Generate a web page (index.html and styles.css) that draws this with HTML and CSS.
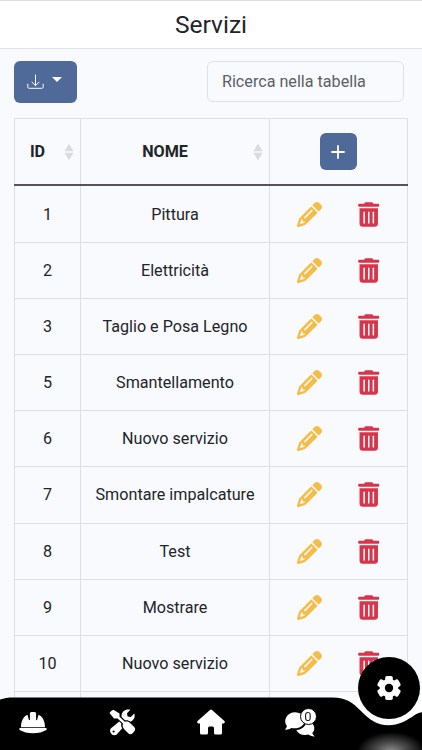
FILE: index.html
```html
<!DOCTYPE html>
<html lang="it">

<head>
  <meta charset="UTF-8">
  <meta name="viewport" content="width=device-width, initial-scale=1.0">
  <title>Servizi</title>
  <link rel="stylesheet" href="styles.css">
</head>

<body>
<!-- icone -->
<svg class="sprite" width="0" height="0">
  <symbol id="pencil" viewBox="0 0 512 512">
    <path d="M410.3 231l11.3-11.3-33.9-33.9-62.1-62.1L291.7 89.8l-11.3 11.3-22.6 22.6L58.6 322.9c-10.4 10.4-18 23.3-22.2 37.4L1 480.7c-2.5 8.4-.2 17.5 6.1 23.7s15.3 8.5 23.7 6.1l120.3-35.4c14.1-4.2 27-11.8 37.4-22.2L387.7 253.7 410.3 231zM160 399.4l-9.1 22.7c-4 3.1-8.5 5.4-13.3 6.9L59.4 452l23-78.1c1.4-4.9 3.8-9.4 6.9-13.3l22.7-9.1v32c0 8.8 7.2 16 16 16h32zM362.7 18.7L348.3 33.2 325.7 55.8 314.3 67.1l33.9 33.9 62.1 62.1 33.9 33.9 11.3-11.3 22.6-22.6 14.5-14.5c25-25 25-65.5 0-90.5L453.3 18.7c-25-25-65.5-25-90.5 0zm-47.4 168l-144 144c-6.2 6.2-16.4 6.2-22.6 0s-6.2-16.4 0-22.6l144-144c6.2-6.2 16.4-6.2 22.6 0s6.2 16.4 0 22.6z"/>
  </symbol>
  <symbol id="trash" viewBox="0 0 448 512">
    <path d="M135.2 17.7C140.6 6.8 151.7 0 163.8 0H284.2c12.1 0 23.2 6.8 28.6 17.7L320 32h96c17.7 0 32 14.3 32 32s-14.3 32-32 32H32C14.3 96 0 81.7 0 64S14.3 32 32 32h96l7.2-14.3zM32 128H416V448c0 35.3-28.7 64-64 64H96c-35.3 0-64-28.7-64-64V128zm96 64c-8.8 0-16 7.2-16 16V432c0 8.8 7.2 16 16 16s16-7.2 16-16V208c0-8.8-7.2-16-16-16zm96 0c-8.8 0-16 7.2-16 16V432c0 8.8 7.2 16 16 16s16-7.2 16-16V208c0-8.8-7.2-16-16-16zm96 0c-8.8 0-16 7.2-16 16V432c0 8.8 7.2 16 16 16s16-7.2 16-16V208c0-8.8-7.2-16-16-16z"/>
  </symbol>
  <symbol id="sort" viewBox="0 0 10 18">
    <path d="M5 .8L9.600 8.200H.4zM.4 9.800h9.200L5 17.200z"/>
  </symbol>
</svg>

<header class="page_header">
  <h1>Servizi</h1>
</header>

<main class="content">
  <div class="toolbar">
    <button class="btn btn_export" type="button" aria-label="Esporta">
      <svg class="icon_download" viewBox="0 0 17 16"><path d="M8.500 1v10.500M5 8.200l3.500 3.500L12 8.200M.8 10.200v2.600c0 1 .5 1.500 1.500 1.500h12.400c1 0 1.500-.5 1.500-1.500v-2.600"/></svg>
      <i class="caret"></i>
    </button>
    <input class="search" type="text" placeholder="Ricerca nella tabella">
  </div>

  <div class="table">
    <div class="row row_head">
      <div class="cell">ID<svg class="sort"><use href="#sort"/></svg></div>
      <div class="cell">NOME<svg class="sort"><use href="#sort"/></svg></div>
      <div class="cell">
        <button class="btn btn_add" type="button" aria-label="Aggiungi">
          <svg width="14" height="14" viewBox="0 0 14 14"><path d="M7 1v12M1 7h12"/></svg>
        </button>
      </div>
    </div>
    <div class="row">
      <div class="cell">1</div>
      <div class="cell">Pittura</div>
      <div class="cell actions"><svg class="edit"><use href="#pencil"/></svg><svg class="delete"><use href="#trash"/></svg></div>
    </div>
    <div class="row">
      <div class="cell">2</div>
      <div class="cell">Elettricità</div>
      <div class="cell actions"><svg class="edit"><use href="#pencil"/></svg><svg class="delete"><use href="#trash"/></svg></div>
    </div>
    <div class="row">
      <div class="cell">3</div>
      <div class="cell">Taglio e Posa Legno</div>
      <div class="cell actions"><svg class="edit"><use href="#pencil"/></svg><svg class="delete"><use href="#trash"/></svg></div>
    </div>
    <div class="row">
      <div class="cell">5</div>
      <div class="cell">Smantellamento</div>
      <div class="cell actions"><svg class="edit"><use href="#pencil"/></svg><svg class="delete"><use href="#trash"/></svg></div>
    </div>
    <div class="row">
      <div class="cell">6</div>
      <div class="cell">Nuovo servizio</div>
      <div class="cell actions"><svg class="edit"><use href="#pencil"/></svg><svg class="delete"><use href="#trash"/></svg></div>
    </div>
    <div class="row">
      <div class="cell">7</div>
      <div class="cell">Smontare impalcature</div>
      <div class="cell actions"><svg class="edit"><use href="#pencil"/></svg><svg class="delete"><use href="#trash"/></svg></div>
    </div>
    <div class="row">
      <div class="cell">8</div>
      <div class="cell">Test</div>
      <div class="cell actions"><svg class="edit"><use href="#pencil"/></svg><svg class="delete"><use href="#trash"/></svg></div>
    </div>
    <div class="row">
      <div class="cell">9</div>
      <div class="cell">Mostrare</div>
      <div class="cell actions"><svg class="edit"><use href="#pencil"/></svg><svg class="delete"><use href="#trash"/></svg></div>
    </div>
    <div class="row">
      <div class="cell">10</div>
      <div class="cell">Nuovo servizio</div>
      <div class="cell actions"><svg class="edit"><use href="#pencil"/></svg><svg class="delete"><use href="#trash"/></svg></div>
    </div>
    <div class="row">
      <div class="cell"></div>
      <div class="cell"></div>
      <div class="cell"></div>
    </div>
  </div>
</main>

<nav class="navbar">
  <svg class="navbar_shape" viewBox="0 0 422 60">
    <defs>
      <radialGradient id="glow">
        <stop offset="0" stop-color="#8c8c8c"/>
        <stop offset=".45" stop-color="#4a4a4a"/>
        <stop offset="1" stop-color="#000"/>
      </radialGradient>
    </defs>
    <path class="navbar_gap" d="M338 6H422V30H360z"/>
    <path d="M0 9.500C4 8 8 7.400 14 7.400H332C347 7.400 353 13 361 21C369 29.500 377 35.300 388.500 35.300C399 35.300 406 30.500 412 27C416 24 418 22.900 422 22.300V60H0z"/>
    <ellipse cx="391" cy="61" rx="34" ry="19" fill="url(#glow)"/>
  </svg>
  <a class="nav_item" href="#">
    <svg width="28" height="28" viewBox="0 0 28 28">
      <path d="M2 19.200C2 13 4.500 8.500 8.500 6.800L10 12.200 10.900 12V5.500Q10.900 4 12.400 4H15.600Q17.100 4 17.100 5.500V12L18 12.200 19.500 6.800C23.500 8.500 26 13 26 19.200zM.5 20H27.500V22C24 24 19 25.300 14 25.300S4 24 .5 22z"/>
    </svg>
  </a>
  <a class="nav_item" href="#">
    <svg width="28" height="28" viewBox="0 0 28 28">
      <path d="M1.500 5Q3 2.500 5.300 1.800L11.500 5.600V8.800L16.800 13.800C18.800 13.200 20.500 13.600 22 15L26 18.800C27.600 20.400 27.600 22 26.200 23.600L24.600 25.200C23 26.600 21.500 26.500 20 25L16.200 21.200C14.600 19.500 14.300 17.500 15 15.600L9.600 10.400H6z"/>
      <path d="M11.200 13.500L2.700 20.400A4.500 4.500 0 0 0 8.500 26.700L14.300 20.200C13 18.500 12.900 17 13.400 15.600zM17 12.300C19 11.900 21 12.400 22.400 13.700C25.800 12.400 27.500 9.300 26.300 5.500L22.800 9 19.600 8.400 19 5.300 22.400 1.800C17.300 .6 13 4 13.600 8.900z"/>
      <circle class="hole" cx="5.600" cy="23.500" r="1.100"/>
    </svg>
  </a>
  <a class="nav_item" href="#">
    <svg width="28" height="28" viewBox="0 0 28 28">
      <path d="M12.700 2.200Q14 1 15.300 2.200L27.400 13Q28.300 14 27.400 15Q26.900 15.600 25 15.500V25Q25 26.600 23.400 26.600H18.600Q17 26.600 17 25V20Q17 18.500 15.500 18.500H12.500Q11 18.500 11 20V25Q11 26.600 9.400 26.600H4.600Q3 26.600 3 25V15.500Q1.100 15.600 .6 15Q-.3 14 .6 13z"/>
    </svg>
  </a>
  <a class="nav_item nav_chat" href="#">
    <svg width="32" height="30" viewBox="0 0 32 30">
      <path d="M30.800 28.400C28 28.500 25.800 27.500 24.500 26.500C19 28 14 25.900 12.300 22C18 21.600 22.300 18 22.300 13H23C28 14 31 17.200 30.200 21.400C29.900 23 29.200 24 28.300 24.800C28.600 26.400 29.700 27.600 30.800 28.400z"/>
      <path d="M.8 21.600C1.900 20.700 2.700 19.400 2.900 18C-1.500 12.500 3.200 4.300 10.800 4.300C16.500 4.300 20.800 7.900 20.800 12.300C20.800 17.800 14.500 21.600 7.300 20C5.500 21.400 3 22 .8 21.600z"/>
    </svg>
    <span class="badge">0</span>
  </a>
</nav>
<a class="nav_active" href="#">
  <svg width="26" height="26" viewBox="0 0 26 26">
    <circle cx="13" cy="13" r="9.300"/>
    <rect x="9.200" y="1" width="7.600" height="24" rx="1.800"/>
    <rect x="9.200" y="1" width="7.600" height="24" rx="1.800" transform="rotate(60 13 13)"/>
    <rect x="9.200" y="1" width="7.600" height="24" rx="1.800" transform="rotate(120 13 13)"/>
    <circle class="hole" cx="13" cy="13" r="4.200"/>
  </svg>
</a>
</body>

</html>
```
FILE: styles.css
```css
* {
  box-sizing: border-box;
}

body {
  margin: 0;
  height: 750px;
  overflow: hidden;
  background: #f9fafd;
  color: #212529;
  font-family: Roboto, sans-serif;
  font-size: 16.15px;
}

svg {
  display: block;
}

.sprite {
  position: absolute;
}

.page_header {
  display: flex;
  align-items: center;
  justify-content: center;
  height: 49px;
  padding-bottom: 1px;
  background: #fff;
  border-top: 1px solid #dcdddf;
  border-bottom: 1px solid #dfe2e8;
}

.page_header h1 {
  margin: 0;
  font-size: 24.5px;
  font-weight: 400;
}

.content {
  padding: 12px 14px 0;
}

.toolbar {
  display: flex;
  justify-content: space-between;
  padding-right: 4px;
  margin: 0 0 15px -.5px;
}

.btn {
  display: flex;
  align-items: center;
  justify-content: center;
  padding: 0;
  border: 0;
  border-radius: 6px;
  background: #4f6a99;
}

.btn svg {
  fill: none;
  stroke: #fff;
  stroke-linecap: round;
}

.btn_export {
  width: 63px;
  height: 42px;
  gap: 8px;
  padding-right: 1px;
}

.btn .icon_download {
  width: 17px;
  height: 16px;
  margin-top: -1px;
}

.caret {
  margin-top: -5px;
  border: 5px solid transparent;
  border-top: 5px solid #fff;
  border-bottom: 0;
}

.search {
  width: 197px;
  height: 41px;
  padding: 0 14px;
  border: 1px solid #dee2e6;
  border-radius: 6px;
  background: #f9fafd;
  font: inherit;
}

.search::placeholder {
  color: #5c6065;
}

/* tabella */
.table {
  width: 394px;
  border: 1px solid #dcdfe6;
  border-width: 1px 0 0 1px;
}

.row {
  display: grid;
  grid-template-columns: 66px 189px 138px;
  height: 56.19px;
  border-bottom: 1px solid #dcdfe6;
}

.cell {
  position: relative;
  display: flex;
  align-items: center;
  justify-content: center;
  border-right: 1px solid #dcdfe6;
}

.row_head {
  height: 67.45px;
  margin-left: -1px;
  padding-left: 1px;
  border-bottom: 2px solid #56525f;
  font-weight: 700;
}

.row_head .cell {
  padding-right: 20px;
}

.row_head .cell:last-child {
  padding: 0 1px 0 0;
}

.sort {
  position: absolute;
  right: 6px;
  width: 10px;
  height: 18px;
  fill: #d9dbde;
}

.btn_add {
  width: 37px;
  height: 37px;
}

.btn_add svg {
  stroke-width: 1.8;
}

.actions {
  gap: 36px;
}

.edit {
  width: 25px;
  height: 25px;
  fill: #f5bd48;
}

.delete {
  width: 21.5px;
  height: 25px;
  fill: #d8344a;
}

/* barra in basso */
.navbar {
  position: fixed;
  left: 0;
  right: 0;
  bottom: 0;
  display: flex;
  align-items: center;
  height: 60px;
  padding-top: 3px;
}

.navbar_shape {
  position: absolute;
  top: 0;
  left: 0;
  width: 422px;
  height: 60px;
}

.navbar_gap {
  fill: #fff;
}

.nav_item {
  position: relative;
  display: flex;
  justify-content: center;
  width: 89px;
  fill: #fff;
}

.nav_item:first-of-type {
  margin-left: -11.5px;
}

.nav_chat {
  padding-top: 2px;
}

.hole {
  fill: #000;
}

.badge {
  position: absolute;
  top: 2px;
  left: 44px;
  width: 17px;
  height: 17px;
  border: 1px solid #000;
  border-radius: 50%;
  background: #fff;
  color: #222;
  font-size: 13px;
  line-height: 15px;
  text-align: center;
}

.nav_active {
  position: fixed;
  right: 2.5px;
  bottom: 31px;
  display: flex;
  align-items: center;
  justify-content: center;
  width: 62px;
  height: 62px;
  border-radius: 50%;
  background: #000;
  fill: #fff;
}
```
